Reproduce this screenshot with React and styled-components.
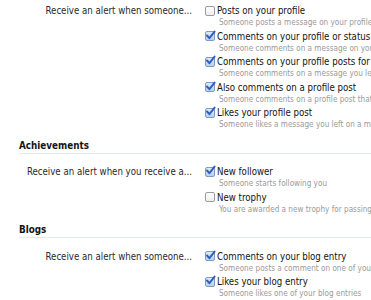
import React from 'react'
import styled, { createGlobalStyle } from 'styled-components'

const GlobalStyle = createGlobalStyle`
    html, body {
        margin: 0;
        padding: 0;
        background: #fff;
    }
    body {
        font-family: "DejaVu Sans Condensed", "DejaVu Sans", sans-serif;
        font-stretch: condensed;
        color: #141414;
        overflow: hidden;
    }
`

const sections = [
    {
        title: null,
        label: 'Receive an alert when someone...',
        options: [
            { title: 'Posts on your profile', desc: 'Someone posts a message on your profile page', checked: false },
            { title: 'Comments on your profile or status', desc: 'Someone comments on a message on your profile page', checked: true },
            { title: 'Comments on your profile posts for others', desc: 'Someone comments on a message you left on another profile', checked: true },
            { title: 'Also comments on a profile post', desc: 'Someone comments on a profile post that you commented on', checked: true },
            { title: 'Likes your profile post', desc: 'Someone likes a message you left on a member profile', checked: true },
        ],
    },
    {
        title: 'Achievements',
        label: 'Receive an alert when you receive a...',
        options: [
            { title: 'New follower', desc: 'Someone starts following you', checked: true },
            { title: 'New trophy', desc: 'You are awarded a new trophy for passing a milestone', checked: false },
        ],
    },
    {
        title: 'Blogs',
        label: 'Receive an alert when someone...',
        options: [
            { title: 'Comments on your blog entry', desc: 'Someone posts a comment on one of your blog entries', checked: true },
            { title: 'Likes your blog entry', desc: 'Someone likes one of your blog entries', checked: true },
        ],
    },
]

function Checkbox({ checked }) {
    return (
        <Box $checked={checked}>
            {checked && (
                <svg width="11" height="11" viewBox="0 0 11 11">
                    <path d="M2 5.5 L4.4 8.2 L9.6 1.6" fill="none" stroke="#2a5fbf" strokeWidth="1.9" strokeLinecap="round" strokeLinejoin="round" />
                </svg>
            )}
        </Box>
    )
}

export default function App() {
    return (
        <Page>
            <GlobalStyle />
            {sections.map((section, i) => (
                <Section key={i} $first={!section.title}>
                    {section.title && <SectionTitle>{section.title}</SectionTitle>}
                    <Row>
                        <RowLabel>{section.label}</RowLabel>
                        <OptionList>
                            {section.options.map((opt) => (
                                <Option key={opt.title}>
                                    <OptionHead>
                                        <Checkbox checked={opt.checked} />
                                        <OptionTitle>{opt.title}</OptionTitle>
                                    </OptionHead>
                                    <OptionDesc>{opt.desc}</OptionDesc>
                                </Option>
                            ))}
                        </OptionList>
                    </Row>
                </Section>
            ))}
        </Page>
    )
}

const Page = styled.div`
    width: 371px;
    padding-top: 4px;
    overflow: hidden;
`

const Section = styled.div`
    margin-top: ${(p) => (p.$first ? '0' : '9.5px')};
`

const SectionTitle = styled.h3`
    margin: 0 0 0 19px;
    padding-bottom: 1px;
    font-size: 9.8px;
    line-height: 12px;
    font-weight: bold;
    color: #141414;
    border-bottom: 1px solid #e3e9ef;
    white-space: nowrap;
`

const Row = styled.div`
    display: grid;
    grid-template-columns: 192px 1fr;
    column-gap: 13px;
    ${SectionTitle} + & {
        margin-top: 11.5px;
    }
`

const RowLabel = styled.div`
    text-align: right;
    font-size: 9.6px;
    line-height: 13px;
    color: #2a2a2a;
    white-space: nowrap;
`

const OptionList = styled.div`
    display: flex;
    flex-direction: column;
    gap: 1.5px;
    min-width: 0;
    overflow: hidden;
`

const Option = styled.div`
    display: flex;
    flex-direction: column;
    white-space: nowrap;
`

const OptionHead = styled.div`
    display: flex;
    align-items: center;
    gap: 2px;
    height: 13px;
`

const Box = styled.span`
    box-sizing: border-box;
    width: 10px;
    height: 10px;
    flex: none;
    display: flex;
    align-items: center;
    justify-content: center;
    border-radius: 2px;
    border: 1px solid ${(p) => (p.$checked ? '#7f9bc2' : '#9c9c9c')};
    background: ${(p) => (p.$checked ? 'linear-gradient(#dfeaf7, #b9cfea)' : 'linear-gradient(#ffffff, #eeeeee)')};
    svg {
        margin-top: -2px;
        margin-left: 1px;
        flex: none;
    }
`

const OptionTitle = styled.span`
    font-size: 9.6px;
    line-height: 13px;
    color: #141414;
`

const OptionDesc = styled.div`
    margin-left: 14px;
    font-size: 8.1px;
    line-height: 11px;
    color: #9a9a9a;
`
